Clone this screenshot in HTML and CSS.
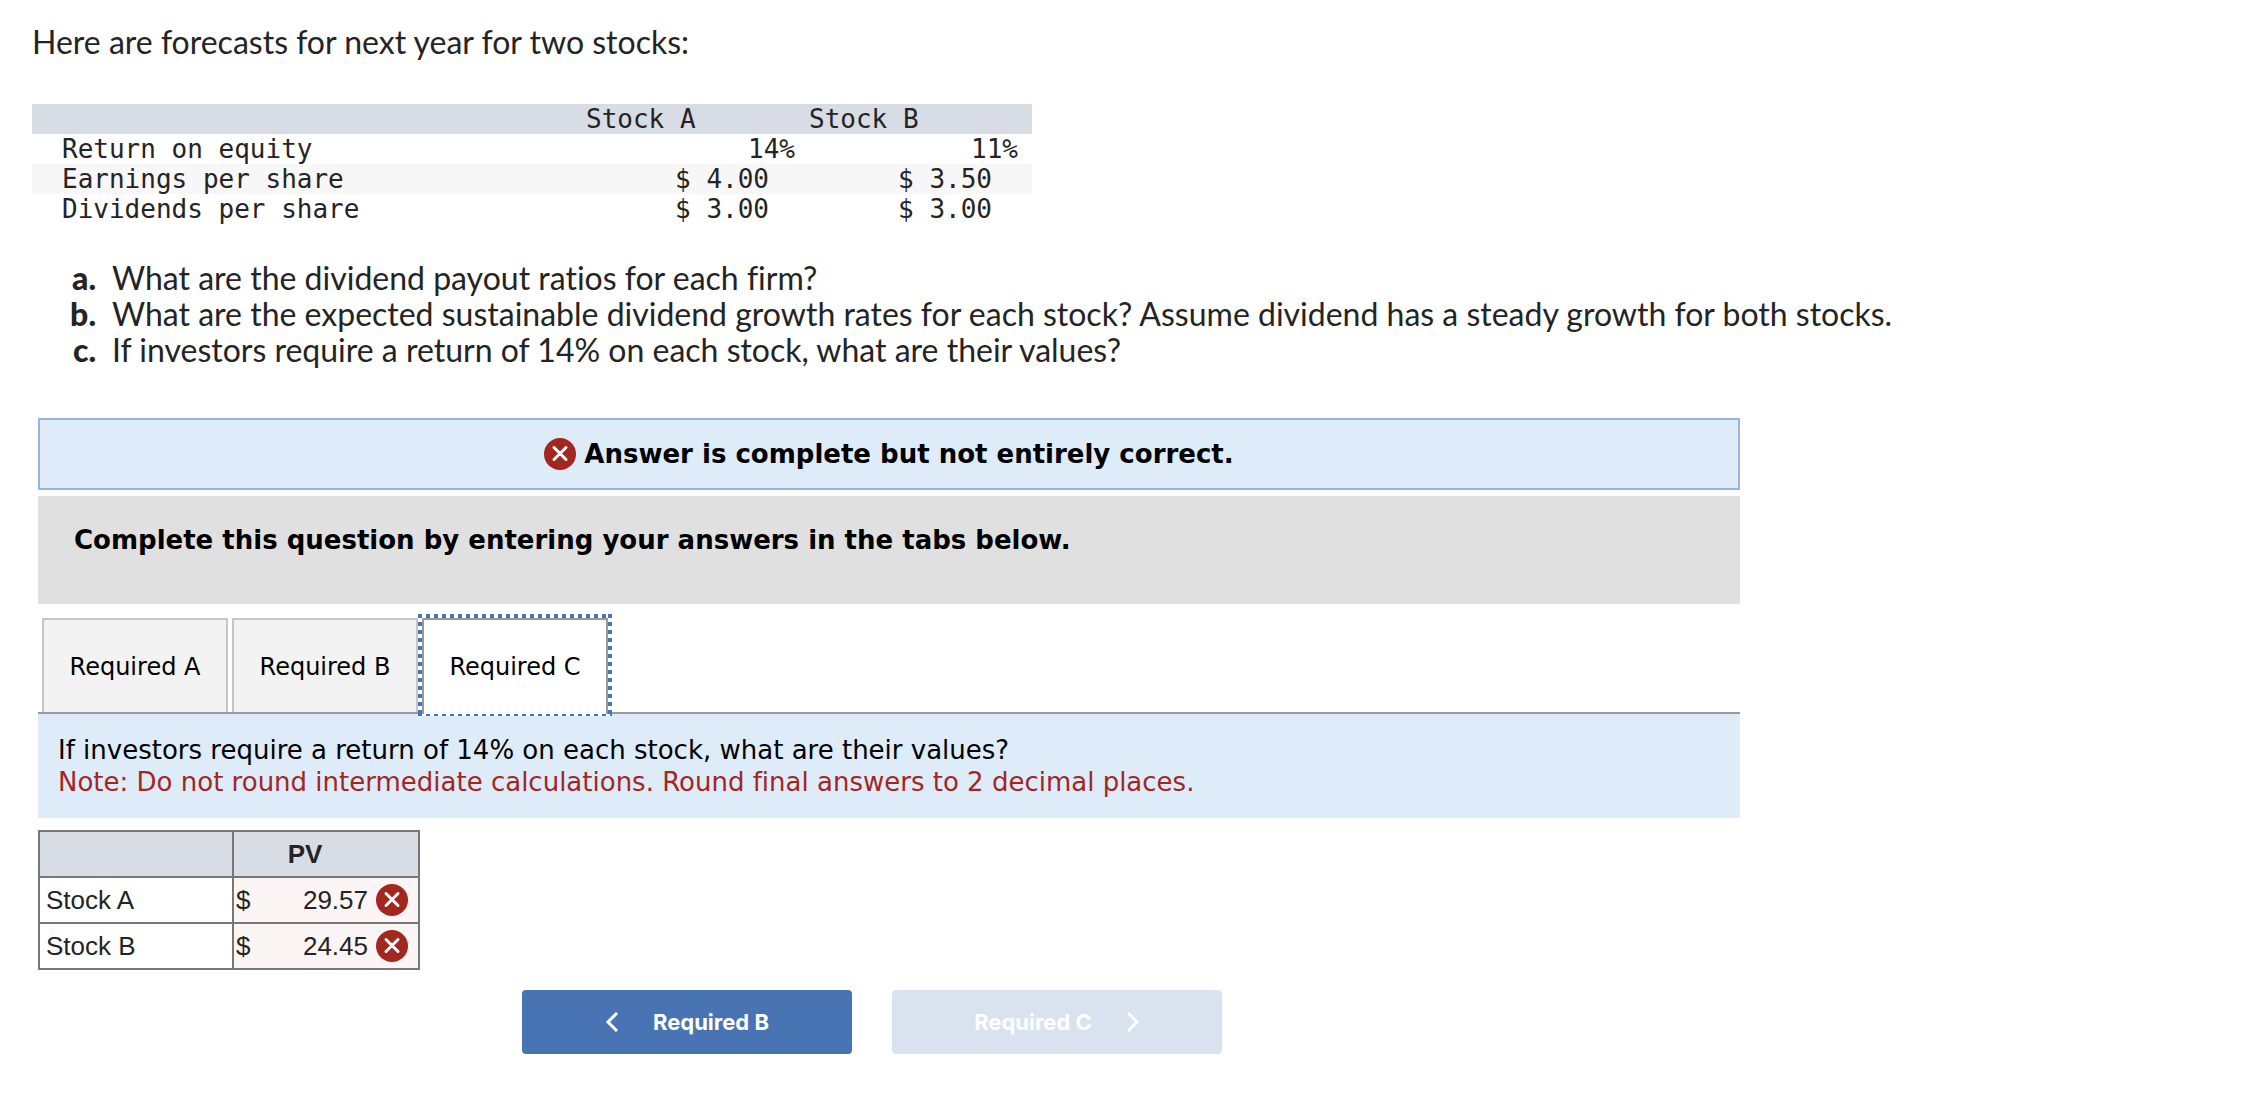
FILE: index.html
```html
<!DOCTYPE html>
<html lang="en">
<head>
    <meta charset="UTF-8">
    <meta name="viewport" content="width=device-width, initial-scale=1.0">
    <title>Stock Forecasts</title>
    <link rel="stylesheet" href="styles.css">
</head>
<body>
    <svg class="sprite" aria-hidden="true">
        <symbol id="wrong" viewBox="0 0 32 32">
            <circle cx="16" cy="16" r="16" fill="#a3261f"/>
            <path d="M10 9.500L22 21.500M22 9.500L10 21.500" fill="none" stroke="#fff" stroke-width="3" stroke-linecap="round"/>
        </symbol>
    </svg>

    <main class="page">
        <p class="intro">Here are forecasts for next year for two stocks:</p>

        <table class="forecast">
            <thead>
                <tr>
                    <th></th>
                    <th scope="col">Stock A</th>
                    <th scope="col">Stock B</th>
                </tr>
            </thead>
            <tbody>
                <tr>
                    <th scope="row">Return on equity</th>
                    <td class="percent">14%</td>
                    <td class="percent">11%</td>
                </tr>
                <tr class="shaded">
                    <th scope="row">Earnings per share</th>
                    <td>$ 4.00</td>
                    <td>$ 3.50</td>
                </tr>
                <tr>
                    <th scope="row">Dividends per share</th>
                    <td>$ 3.00</td>
                    <td>$ 3.00</td>
                </tr>
            </tbody>
        </table>

        <ol class="questions">
            <li>What are the dividend payout ratios for each firm?</li>
            <li>What are the expected sustainable dividend growth rates for each stock? Assume dividend has a steady growth for both stocks.</li>
            <li>If investors require a return of 14% on each stock, what are their values?</li>
        </ol>

        <section class="answer">
            <div class="status">
                <svg class="icon"><use href="#wrong"/></svg>
                <strong>Answer is complete but not entirely correct.</strong>
            </div>

            <div class="instructions">Complete this question by entering your answers in the tabs below.</div>

            <div class="tabs" role="tablist">
                <button class="tab" role="tab" aria-selected="false">Required A</button>
                <button class="tab" role="tab" aria-selected="false">Required B</button>
                <button class="tab active" role="tab" aria-selected="true">Required C</button>
            </div>

            <div class="prompt" role="tabpanel">
                <p>If investors require a return of 14% on each stock, what are their values?</p>
                <p class="note">Note: Do not round intermediate calculations. Round final answers to 2 decimal places.</p>
            </div>

            <table class="values">
                <thead>
                    <tr>
                        <th></th>
                        <th class="pv" scope="col">PV</th>
                    </tr>
                </thead>
                <tbody>
                    <tr>
                        <td><label for="stock-a">Stock A</label></td>
                        <td class="wrong">
                            <div class="entry">
                                <span>$</span>
                                <input type="text" id="stock-a" value="29.57">
                                <svg class="icon"><use href="#wrong"/></svg>
                            </div>
                        </td>
                    </tr>
                    <tr>
                        <td><label for="stock-b">Stock B</label></td>
                        <td class="wrong">
                            <div class="entry">
                                <span>$</span>
                                <input type="text" id="stock-b" value="24.45">
                                <svg class="icon"><use href="#wrong"/></svg>
                            </div>
                        </td>
                    </tr>
                </tbody>
            </table>

            <div class="nav">
                <button class="nav-button">
                    <svg class="chevron" viewBox="0 0 14 20"><path d="M12 1L3 10L12 19"/></svg>
                    Required B
                </button>
                <button class="nav-button" disabled>
                    Required C
                    <svg class="chevron" viewBox="0 0 14 20"><path d="M2 1L11 10L2 19"/></svg>
                </button>
            </div>
        </section>
    </main>
</body>
</html>
```
FILE: styles.css
```css
* {
    box-sizing: border-box;
    margin: 0;
    padding: 0;
}

body {
    background-color: #fff;
    color: #242424;
    font-family: 'Lato', sans-serif;
    font-size: 32px;
    font-variant-ligatures: none;
    line-height: 36px;
}

button, input {
    font: inherit;
    color: inherit;
    border: none;
}

table {
    border-collapse: collapse;
}

.sprite {
    display: none;
}

.page {
    padding: 24px 32px;
}

/* Forecast table */
.forecast {
    width: 1000px;
    max-width: 100%;
    margin-top: 44px;
    table-layout: fixed;
    font-family: 'DejaVu Sans Mono', monospace;
    font-size: 26px;
    line-height: 30px;
}

.forecast th {
    font-weight: normal;
    text-align: left;
}

.forecast thead tr {
    background-color: #d8dce5;
}

.forecast thead th {
    width: 223px;
}

.forecast thead th:first-child {
    width: auto;
}

.forecast tbody th {
    padding-left: 30px;
}

.forecast td {
    padding-right: 40px;
    text-align: right;
}

.forecast td.percent {
    padding-right: 14px;
}

.forecast .shaded {
    background-color: #f7f7f7;
}

/* Question list */
.questions {
    margin-top: 36px;
    list-style: none;
    counter-reset: question;
}

.questions li {
    display: flex;
    gap: 16px;
    counter-increment: question;
}

.questions li::before {
    content: counter(question, lower-alpha) ".";
    flex: 0 0 64px;
    font-weight: 900;
    text-align: right;
}

/* Answer area */
.answer {
    max-width: 1702px;
    margin: 50px 6px 0;
    color: #000;
    font-family: 'DejaVu Sans', sans-serif;
    font-size: 26px;
    line-height: 32px;
}

.icon {
    flex: none;
    width: 32px;
    height: 32px;
}

.status {
    display: flex;
    justify-content: center;
    align-items: center;
    gap: 8px;
    padding: 18px;
    border: 2px solid #98b4dc;
    background-color: #deebf9;
}

.instructions {
    margin-top: 6px;
    padding: 28px 36px 48px;
    background-color: #e0e0e0;
    font-weight: bold;
}

.tabs {
    display: flex;
    gap: 4px;
    margin-top: 14px;
    padding-left: 4px;
    border-bottom: 2px solid #999;
}

.tab {
    position: relative;
    width: 186px;
    padding: 32px 0 30px;
    border: 2px solid #c6c6c6;
    border-bottom: none;
    background-color: #f3f3f3;
    font-size: 24px;
    line-height: 30px;
}

.tab.active {
    margin-bottom: -2px;
    padding-bottom: 32px;
    border-color: #999;
    background-color: #fff;
}

/* Square-dotted focus ring */
.tab.active::after {
    content: "";
    position: absolute;
    inset: -6px -6px -2px;
    background:
        repeating-linear-gradient(90deg, #4874b8 0 4px, transparent 4px 8px) top / 100% 4px no-repeat,
        repeating-linear-gradient(90deg, #4874b8 0 4px, #fff 4px 8px) bottom / 100% 2px no-repeat,
        repeating-linear-gradient(#4874b8 0 4px, #fff 4px 8px) left / 4px 100% no-repeat,
        repeating-linear-gradient(#4874b8 0 4px, #fff 4px 8px) right / 4px 100% no-repeat;
}

.prompt {
    padding: 20px;
    background-color: #deebf9;
}

.note {
    color: #a3261f;
}

/* Values table */
.values {
    margin-top: 12px;
    color: #242424;
    font-family: 'Liberation Sans', sans-serif;
}

.values th, .values td {
    width: 194px;
    height: 46px;
    padding: 0 6px;
    border: 2px solid #777;
}

.values th {
    background-color: #d8dce5;
}

.values th.pv, .values td.wrong {
    width: 186px;
    padding: 0 10px 0 2px;
}

.values th.pv {
    padding-right: 44px;
}

.values td.wrong {
    background-color: #fcf5f5;
}

.entry {
    display: flex;
    align-items: center;
}

.entry input {
    flex: 1;
    width: 100px;
    min-width: 0;
    margin-right: 8px;
    background: none;
    text-align: right;
}

/* Previous / next */
.nav {
    display: flex;
    justify-content: center;
    gap: 40px;
    margin-top: 20px;
    padding-right: 34px;
}

.nav-button {
    display: flex;
    justify-content: center;
    align-items: center;
    gap: 34px;
    width: 330px;
    height: 64px;
    border-radius: 4px;
    background-color: #4874b4;
    color: #fff;
    font-family: 'Inter', sans-serif;
    font-size: 22px;
    font-weight: bold;
}

.nav-button:disabled {
    background-color: #d9e3f0;
}

.chevron {
    width: 14px;
    height: 20px;
    fill: none;
    stroke: currentColor;
    stroke-width: 3;
}
```
